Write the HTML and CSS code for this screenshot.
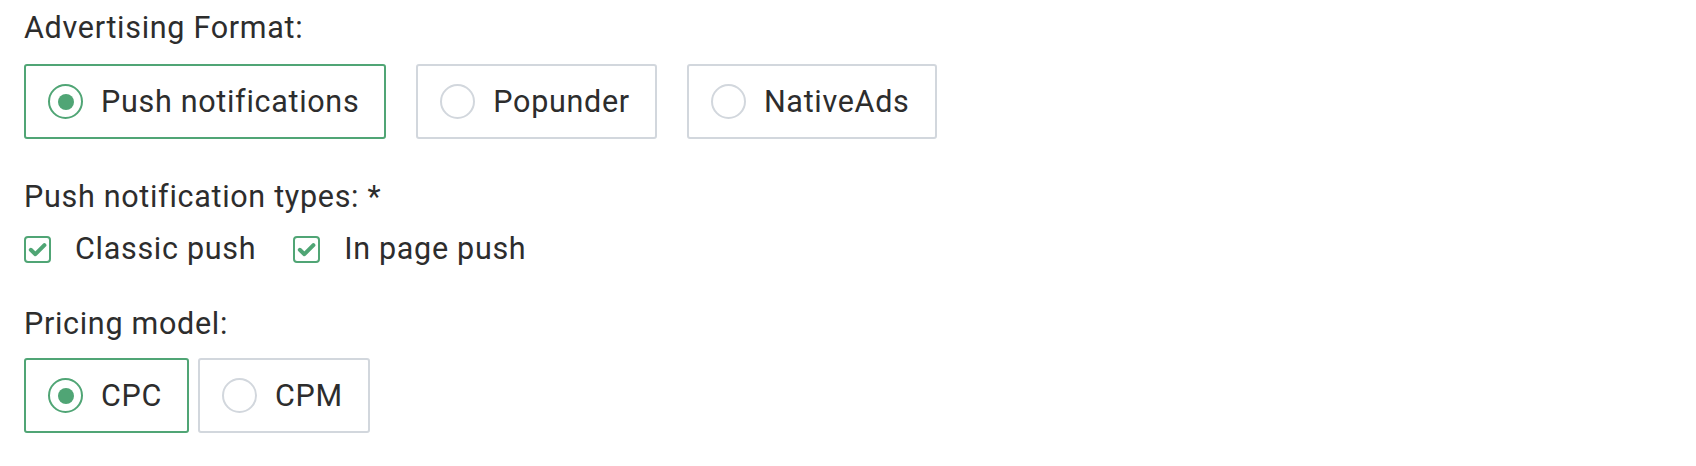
FILE: index.html
```html
<!DOCTYPE html>
<html lang="en">
<head>
<meta charset="utf-8">
<title>Advertising Format</title>
<link rel="stylesheet" href="styles.css">
</head>
<body>
<form class="page">
  <div class="field-label">Advertising Format:</div>
  <div class="option-row option-row-wide">
    <label class="option option-active"><span class="radio radio-on"></span><span class="option-text">Push notifications</span></label>
    <label class="option"><span class="radio"></span><span class="option-text">Popunder</span></label>
    <label class="option"><span class="radio"></span><span class="option-text">NativeAds</span></label>
  </div>

  <div class="field-label label-mid">Push notification types: *</div>
  <div class="check-row">
    <label class="check-item"><span class="checkbox"><svg viewBox="0 0 27 27" width="27" height="27"><path d="M6.8 13.8 L11.4 18.2 L20.4 9.2" fill="none" stroke="#4fa574" stroke-width="4" stroke-linecap="round" stroke-linejoin="round"/></svg></span><span class="check-text">Classic push</span></label>
    <label class="check-item"><span class="checkbox"><svg viewBox="0 0 27 27" width="27" height="27"><path d="M6.8 13.8 L11.4 18.2 L20.4 9.2" fill="none" stroke="#4fa574" stroke-width="4" stroke-linecap="round" stroke-linejoin="round"/></svg></span><span class="check-text">In page push</span></label>
  </div>

  <div class="field-label label-last">Pricing model:</div>
  <div class="option-row option-row-tight">
    <label class="option option-active"><span class="radio radio-on"></span><span class="option-text">CPC</span></label>
    <label class="option"><span class="radio"></span><span class="option-text">CPM</span></label>
  </div>
</form>
</body>
</html>
```
FILE: styles.css
```css
html, body {
  margin: 0;
  padding: 0;
  background: #ffffff;
}

body {
  font-family: Roboto, "Liberation Sans", Arial, sans-serif;
  font-size: 30.5px;
  letter-spacing: 0.7px;
  line-height: 36px;
  color: #2d2d2d;
}

.page {
  display: flex;
  flex-direction: column;
  align-items: flex-start;
  padding: 10px 24px 0 24px;
}

.field-label {
  height: 36px;
}

.label-mid {
  margin-top: 40px;
}

.label-last {
  margin-top: 39px;
}

.option-row {
  display: flex;
  align-items: center;
}

.option-row-wide {
  margin-top: 18px;
  gap: 30px;
}

.option-row-tight {
  margin-top: 16px;
  gap: 9px;
}

.option {
  box-sizing: border-box;
  height: 75px;
  display: flex;
  align-items: center;
  padding: 0 25px 0 22px;
  border: 2px solid #d2d7dd;
  border-radius: 3px;
  background: #fff;
}

.option-active {
  border-color: #50a575;
}

.radio {
  box-sizing: border-box;
  width: 35px;
  height: 35px;
  border-radius: 50%;
  border: 2px solid #d2d7dd;
  display: flex;
  align-items: center;
  justify-content: center;
  flex: none;
}

.radio-on {
  border-color: #50a575;
}

.radio-on::after {
  content: "";
  width: 16px;
  height: 16px;
  border-radius: 50%;
  background: #50a575;
}

.option-text {
  margin-left: 18px;
  white-space: nowrap;
}

.check-row {
  margin-top: 16px;
  display: flex;
  align-items: center;
  gap: 37px;
}

.check-item {
  display: flex;
  align-items: center;
}

.checkbox {
  box-sizing: border-box;
  width: 27px;
  height: 27px;
  border: 2px solid #50a575;
  border-radius: 4px;
  display: flex;
  align-items: center;
  justify-content: center;
  flex: none;
}

.checkbox svg {
  display: block;
  flex: none;
}

.check-text {
  margin-left: 24px;
  white-space: nowrap;
}
```
